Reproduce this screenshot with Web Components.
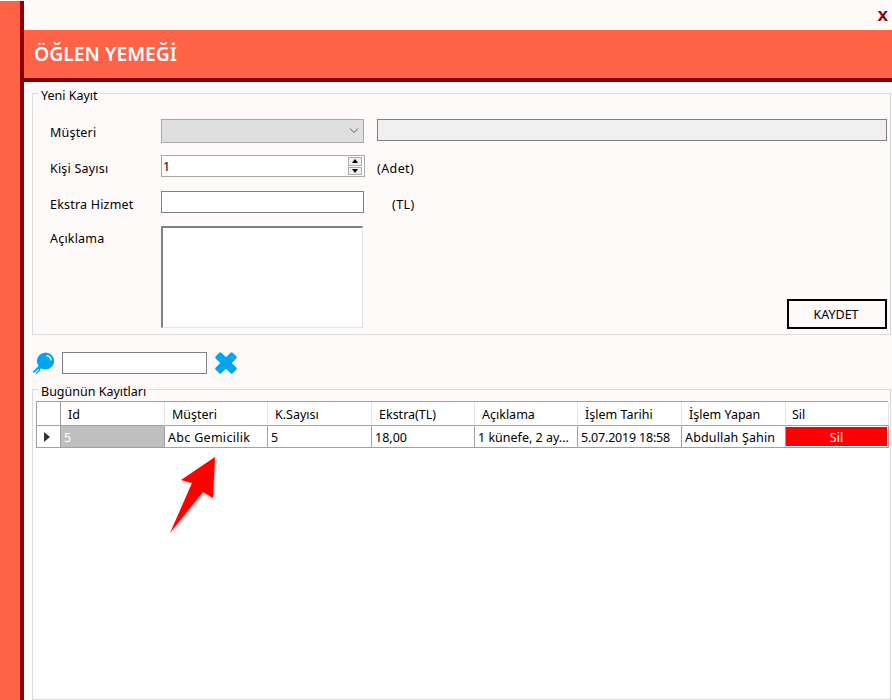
<!DOCTYPE html>
<html lang="tr">
<head>
<meta charset="UTF-8">
<title>Öğlen Yemeği</title>
<style>
  html, body { margin: 0; padding: 0; height: 700px; overflow: hidden; background: #fffafa; }
  body { font-family: "Noto Sans", sans-serif; font-size: 12.5px; color: #000; }
</style>
</head>
<body>

<lunch-page></lunch-page>

<script>
  class GroupBox extends HTMLElement {
    constructor() {
      super();
      this.attachShadow({ mode: 'open' });
      this.shadowRoot.innerHTML = `
        <style>
          :host { display: block; position: relative; border: 1px solid #dcdcdc; box-sizing: border-box; }
          .legend { position: absolute; left: 5px; top: -5px; padding: 0 3px; background: #fffafa; line-height: 14px; white-space: nowrap; }
        </style>
        <div class="legend">${this.getAttribute('label')}</div>
        <slot></slot>
      `;
    }
  }
  customElements.define('group-box', GroupBox);

  class SpinBox extends HTMLElement {
    constructor() {
      super();
      this.attachShadow({ mode: 'open' });
      this.shadowRoot.innerHTML = `
        <style>
          :host { display: flex; align-items: center; justify-content: space-between; box-sizing: border-box; width: 204px; height: 22px; background: #fff; border: 1px solid #a9a9a9; padding: 1px 2px 1px 1px; }
          .btns { display: flex; flex-direction: column; gap: 1px; width: 14px; height: 18px; }
          .btn { flex: 1; background: #f0f0f0; border: 1px solid #adadad; box-sizing: border-box; display: flex; align-items: center; justify-content: center; }
          .up { width: 0; height: 0; border: 3px solid transparent; border-top: 0; border-bottom: 4px solid #000; }
          .down { width: 0; height: 0; border: 3px solid transparent; border-bottom: 0; border-top: 4px solid #000; }
        </style>
        <span><slot></slot></span>
        <div class="btns">
          <div class="btn"><div class="up"></div></div>
          <div class="btn"><div class="down"></div></div>
        </div>
      `;
    }
  }
  customElements.define('spin-box', SpinBox);

  class GridView extends HTMLElement {
    constructor() {
      super();
      this.attachShadow({ mode: 'open' });
      const cols = ['Id', 'Müşteri', 'K.Sayısı', 'Ekstra(TL)', 'Açıklama', 'İşlem Tarihi', 'İşlem Yapan', 'Sil'];
      const vals = ['5', 'Abc Gemicilik', '5', '18,00', '1 künefe, 2 ay...', '5.07.2019 18:58', 'Abdullah Şahin'];
      // tiny per-cell tracking, the reference font runs a bit wider or narrower
      const track = [0, .3, 0, 0, 0, -.2, .15];
      this.shadowRoot.innerHTML = `
        <style>
          :host { display: block; background: #fff; height: 297px; }
          .grid { display: grid; grid-template-columns: 24px 104px 103px 104px 103px 103px 104px 104px 103px; grid-template-rows: 24px 22px; border-top: 1px solid #a0a0a0; border-left: 1px solid #a0a0a0; width: 852px; box-sizing: border-box; }
          .c { box-sizing: border-box; border-right: 1px solid #a0a0a0; border-bottom: 1px solid #a0a0a0; display: flex; align-items: center; white-space: nowrap; overflow: hidden; }
          .h { padding-left: 7px; padding-top: 1px; border-right-color: #e4e4e4; border-bottom-color: #a0a0a0; }
          .h.first { border-right-color: #a0a0a0; padding: 0; }
          .h.last { padding-left: 6px; }
          .d { padding: 1px 0 0 3px; }
          .rowhead { justify-content: center; padding: 0 4px 0 0; }
          .tri { width: 0; height: 0; border: 5px solid transparent; border-right: 0; border-left: 6px solid #333; }
          .sel { background: #bfbfbf; color: #fff; }
          .del { padding: 1px 1px 1px 0; }
          .del div { flex: 1; height: 100%; background: #f00; color: #fff; display: flex; align-items: center; justify-content: center; padding-top: 1px; box-sizing: border-box; }
        </style>
        <div class="grid">
          <div class="c h first"></div>
          ${cols.map((c, i) => `<div class="c h${i === 7 ? ' last' : ''}">${c}</div>`).join('')}
          <div class="c rowhead"><div class="tri"></div></div>
          ${vals.map((v, i) => `<div class="c d${i === 0 ? ' sel' : ''}" style="letter-spacing:${track[i]}px">${v}</div>`).join('')}
          <div class="c del"><div>Sil</div></div>
        </div>
      `;
    }
  }
  customElements.define('grid-view', GridView);

  class LunchPage extends HTMLElement {
    constructor() {
      super();
      this.attachShadow({ mode: 'open' });
      this.shadowRoot.innerHTML = `
        <style>
          :host { display: flex; height: 700px; position: relative; }
          .side { width: 20px; margin-top: 1px; background: #ff6347; border-right: 4px solid #8b0000; flex: none; }
          .main { flex: 1; min-width: 0; display: flex; flex-direction: column; }
          .top { height: 30px; display: flex; justify-content: flex-end; }
          .x { color: #8b0000; font-weight: 700; font-size: 19px; line-height: 30px; margin-right: 4px; font-family: "Liberation Sans", sans-serif; }
          .head { height: 48px; background: #ff6347; border-bottom: 4px solid #8b0000; color: #fff; font-weight: 600; font-size: 19.3px; display: flex; align-items: center; padding: 0 0 2px 10px; box-sizing: content-box; height: 46px; }
          .form { margin: 11px 1px 0 8px; height: 242px; display: grid; grid-template-columns: 111px 216px 1fr; grid-template-rows: 22px 22px 22px 102px; row-gap: 14px; padding: 25px 4px 0 17px; box-sizing: border-box; position: relative; }
          .lbl { display: flex; align-items: center; padding-top: 4px; box-sizing: border-box; letter-spacing: .2px; }
          .lbl.t { align-items: flex-start; padding-top: 3px; }
          .combo { width: 203px; height: 24px; background: #dfdfdf; border: 1px solid #a9a9a9; box-sizing: border-box; display: flex; align-items: center; justify-content: flex-end; padding-right: 4px; }
          .ro { height: 22px; width: 510px; background: #f0f0f0; border: 1px solid #808080; box-sizing: border-box; }
          .inp { background: #fff; border: 1px solid #808080; box-sizing: border-box; height: 22px; }
          .unit { display: flex; align-items: center; padding-top: 4px; box-sizing: border-box; letter-spacing: .4px; }
          .area { width: 202px; height: 102px; margin-top: -1px; background: #fff; box-sizing: border-box; border: 1px solid #e3e3e3; border-top: 2px solid #808080; border-left: 2px solid #808080; }
          .save { position: absolute; right: 3px; bottom: 5px; width: 100px; height: 30px; box-sizing: border-box; border: 2px solid #000; display: flex; align-items: center; justify-content: center; padding-right: 2px; }
          .search { display: flex; align-items: center; height: 22px; margin: 17px 0 0 8px; }
          .search .inp { width: 145px; margin: 0 8px; }
          svg { display: block; flex: none; }
          .list { margin: 15px 1px 0 8px; flex: 1; padding: 11px 0 0 3px; }
          .arrow { position: absolute; left: 165px; top: 452px; }
        </style>
        <div class="side"></div>
        <div class="main">
          <div class="top"><span class="x">x</span></div>
          <div class="head">ÖĞLEN YEMEĞİ</div>
          <group-box class="form" label="Yeni Kayıt">
            <div class="lbl">Müşteri</div>
            <div class="combo">
              <svg width="10" height="6" viewBox="0 0 10 6"><path d="M1 .5 5 4.5 9 .5" fill="none" stroke="#555" stroke-width="1"/></svg>
            </div>
            <div class="ro"></div>
            <div class="lbl">Kişi Sayısı</div>
            <spin-box>1</spin-box>
            <div class="unit">(Adet)</div>
            <div class="lbl">Ekstra Hizmet</div>
            <div class="inp" style="width:203px"></div>
            <div class="unit" style="padding-left:15px">(TL)</div>
            <div class="lbl t">Açıklama</div>
            <div class="area"></div>
            <div></div>
            <div class="save">KAYDET</div>
          </group-box>
          <div class="search">
            <svg width="22" height="22" viewBox="0 0 22 22">
              <circle cx="13.5" cy="9" r="8.6" fill="#00a5f0"/>
              <path d="M14.5 3.6a5.4 5.4 0 0 1 4.6 4.8" fill="none" stroke="#fff" stroke-width="1.4"/>
              <path d="M9 14 6 17" stroke="#00a5f0" stroke-width="3.5"/>
              <path d="M5 15.5 .6 19.8 1.8 20.9 6.5 17Z" fill="#00a5f0"/>
              <path d="M4.6 21 7.6 18.2" stroke="#00a5f0" stroke-width="1.4" stroke-linecap="round"/>
            </svg>
            <div class="inp"></div>
            <svg width="22" height="22" viewBox="0 0 22 22">
              <g transform="translate(11 11) rotate(45)" fill="#00a5f0">
                <rect x="-12" y="-4" width="24" height="8" rx="1.5"/>
                <rect x="-4" y="-12" width="8" height="24" rx="1.5"/>
              </g>
            </svg>
          </div>
          <group-box class="list" label="Bugünün Kayıtları">
            <grid-view></grid-view>
          </group-box>
        </div>
        <svg class="arrow" width="56" height="88" viewBox="165 452 56 88">
          <defs><filter id="s" x="-30%" y="-30%" width="160%" height="160%"><feDropShadow dx="1" dy="1.5" stdDeviation="1.2" flood-color="#000" flood-opacity=".3"/></filter></defs>
          <path d="M215 457 181 480 192 483 170 533 203 492 213 498Z" fill="#f00" filter="url(#s)"/>
        </svg>
      `;
    }
  }
  customElements.define('lunch-page', LunchPage);
</script>
</body>
</html>
